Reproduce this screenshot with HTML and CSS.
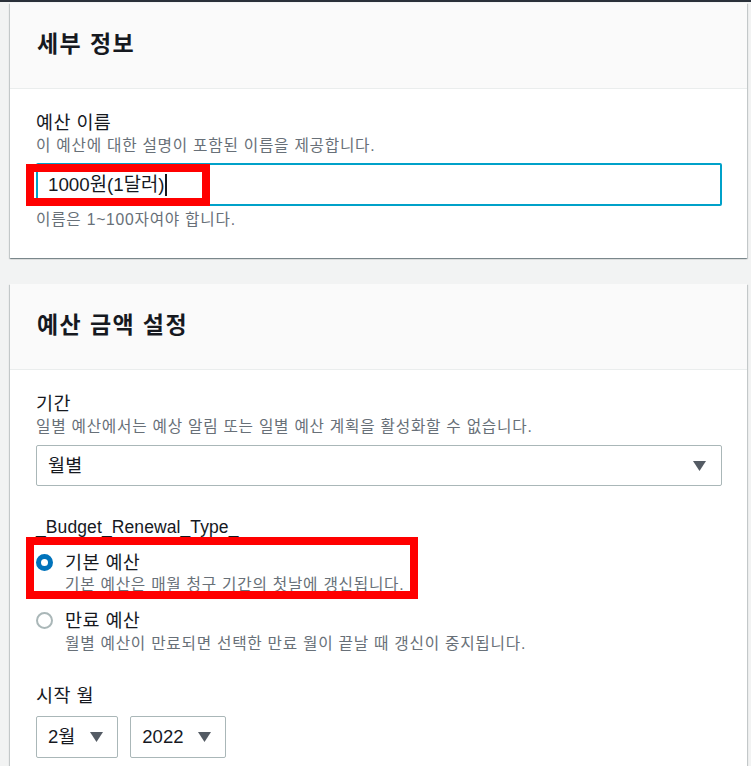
FILE: index.html
```html
<!DOCTYPE html>
<html lang="ko">
<head>
<meta charset="utf-8">
<title>예산 설정</title>
<link rel="stylesheet" href="styles.css">
</head>
<body>
<div class="topbar"></div>
<main class="page">
  <section class="card">
    <header class="card-header"><h2 class="card-title">세부 정보</h2></header>
    <div class="card-body">
      <div class="field">
        <div class="label">예산 이름</div>
        <div class="desc">이 예산에 대한 설명이 포함된 이름을 제공합니다.</div>
        <div class="input-wrap">
          <div class="input is-focused"><span class="input-value">1000원(1달러)</span><span class="caret"></span></div>
          <div class="highlight highlight-name"></div>
        </div>
        <div class="hint">이름은 1~100자여야 합니다.</div>
      </div>
    </div>
  </section>

  <section class="card">
    <header class="card-header"><h2 class="card-title">예산 금액 설정</h2></header>
    <div class="card-body">
      <div class="field">
        <div class="label">기간</div>
        <div class="desc">일별 예산에서는 예상 알림 또는 일별 예산 계획을 활성화할 수 없습니다.</div>
        <div class="select select-wide">
          <span class="select-value">월별</span>
          <svg class="caret-down" width="13" height="10" viewBox="0 0 13 10"><path d="M0 0H13L6.5 10Z"/></svg>
        </div>
      </div>

      <div class="field field-renewal">
        <div class="label label-latin">_Budget_Renewal_Type_</div>
        <div class="radio-group">
          <div class="radio-option">
            <span class="radio is-checked"></span>
            <div class="radio-text">
              <div class="radio-label">기본 예산</div>
              <div class="radio-desc">기본 예산은 매월 청구 기간의 첫날에 갱신됩니다.</div>
            </div>
            <div class="highlight highlight-radio"></div>
          </div>
          <div class="radio-option">
            <span class="radio"></span>
            <div class="radio-text">
              <div class="radio-label">만료 예산</div>
              <div class="radio-desc radio-desc-2">월별 예산이 만료되면 선택한 만료 월이 끝날 때 갱신이 중지됩니다.</div>
            </div>
          </div>
        </div>
      </div>

      <div class="field field-start">
        <div class="label">시작 월</div>
        <div class="select-row">
          <div class="select">
            <span class="select-value">2월</span>
            <svg class="caret-down" width="13" height="10" viewBox="0 0 13 10"><path d="M0 0H13L6.5 10Z"/></svg>
          </div>
          <div class="select">
            <span class="select-value">2022</span>
            <svg class="caret-down" width="13" height="10" viewBox="0 0 13 10"><path d="M0 0H13L6.5 10Z"/></svg>
          </div>
        </div>
      </div>
    </div>
  </section>
</main>
</body>
</html>
```
FILE: styles.css
```css
html, body {
  margin: 0;
  padding: 0;
}

body {
  background: #f2f3f3;
  color: #16191f;
  font-family: "Liberation Sans", "Noto Sans CJK KR", sans-serif;
  overflow: hidden;
}

.topbar {
  height: 2px;
  background: #2a3039;
}

.page {
  padding: 1px 4px 0 10px;
}

.card {
  background: #ffffff;
  box-shadow: 0 1px 1px 0 rgba(0, 28, 36, 0.3),
              1px 1px 1px 0 rgba(0, 28, 36, 0.15),
              -1px 1px 1px 0 rgba(0, 28, 36, 0.15);
}

.card + .card {
  margin-top: 26px;
}

.card-header {
  box-sizing: border-box;
  height: 86px;
  background: #fafafa;
  border-bottom: 1px solid #eaeded;
  display: flex;
  align-items: center;
  padding: 0 27px 3px;
}

.card-title {
  margin: 0;
  font-size: 23px;
  line-height: 30px;
  font-weight: 700;
  letter-spacing: 1.4px;
  color: #16191f;
}

.card-body {
  padding: 22px 25px 28px 26px;
}

.label {
  font-size: 18.5px;
  line-height: 24px;
  letter-spacing: 0.4px;
  color: #16191f;
}

.label-latin {
  font-size: 17.5px;
  letter-spacing: 0.1px;
}

.desc,
.hint {
  font-size: 15.7px;
  line-height: 22px;
  letter-spacing: 0.75px;
  color: #687078;
}

.hint {
  line-height: 20px;
  margin-top: 4px;
}

.input-wrap {
  position: relative;
  margin-top: 6px;
}

.input {
  box-sizing: border-box;
  height: 43px;
  border: 2px solid #00a1c9;
  border-radius: 2px;
  padding: 0 10px;
  display: flex;
  align-items: center;
  font-size: 18.75px;
  line-height: 24px;
}

.caret {
  display: inline-block;
  width: 2px;
  height: 22px;
  margin-left: 1px;
  background: #16191f;
}

.highlight {
  position: absolute;
  box-sizing: border-box;
  border: 8px solid #ff0000;
  pointer-events: none;
}

.highlight-name {
  left: -10px;
  top: 1px;
  width: 184px;
  height: 42px;
}

.select {
  box-sizing: border-box;
  height: 42px;
  border: 1px solid #aab7b8;
  border-radius: 2px;
  display: inline-flex;
  align-items: center;
  gap: 15px;
  padding: 0 14px 0 11px;
  font-size: 18.5px;
  line-height: 24px;
  letter-spacing: 0.3px;
  color: #16191f;
  background: #fff;
}

.select-wide {
  display: flex;
  justify-content: space-between;
  height: 41px;
  margin-top: 7px;
  padding-right: 15px;
}

.caret-down {
  display: block;
  fill: #545b64;
  flex: none;
}

.field-renewal {
  margin-top: 29px;
}

.radio-group {
  margin-top: 12px;
}

.radio-option {
  position: relative;
  display: flex;
  align-items: flex-start;
  gap: 12px;
}

.radio-option + .radio-option {
  margin-top: 14px;
}

.radio {
  box-sizing: border-box;
  flex: none;
  width: 17px;
  height: 17px;
  margin-top: 3px;
  border-radius: 50%;
  border: 2px solid #aab7b8;
  background: #fff;
}

.radio.is-checked {
  border: 5.5px solid #0073bb;
}

.radio-label {
  font-size: 18.5px;
  line-height: 24px;
  letter-spacing: 0.4px;
}

.radio-desc {
  font-size: 15.7px;
  line-height: 20px;
  letter-spacing: 0.75px;
  color: #687078;
}

.radio-desc-2 {
  margin-top: 1px;
}

.highlight-radio {
  left: -10px;
  top: -14px;
  width: 392px;
  height: 62px;
}

.field-start {
  margin-top: 30px;
}

.select-row {
  display: flex;
  gap: 12px;
  margin-top: 8px;
}

.select-row .select {
  padding-right: 14px;
  letter-spacing: 0;
}
```
